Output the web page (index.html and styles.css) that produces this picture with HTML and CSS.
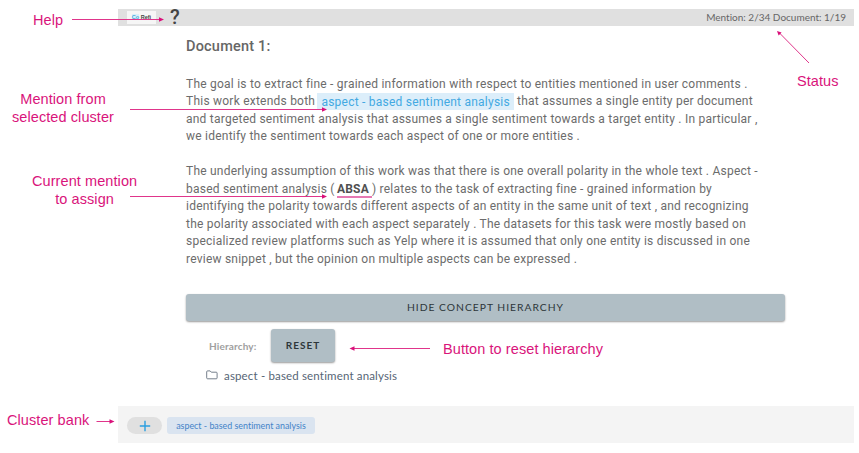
FILE: index.html
```html
<!DOCTYPE html>
<html lang="en">
<head>
<meta charset="utf-8">
<title>Annotation tool</title>
<link rel="stylesheet" href="styles.css">
</head>
<body>
<div class="app">
  <header class="topbar">
    <div class="logo"><span class="logo-co">Co</span> <span class="logo-refi">Refi</span></div>
    <div class="help">?</div>
    <div class="status">Mention: 2/34 Document: 1/19</div>
  </header>
  <main class="content">
    <h1 class="title">Document 1:</h1>
    <p class="para">The goal is to extract fine - grained information with respect to entities mentioned in user comments .<br>This work extends both <span class="mention">aspect - based sentiment analysis</span> that assumes a single entity per document<br>and targeted sentiment analysis that assumes a single sentiment towards a target entity . In particular ,<br>we identify the sentiment towards each aspect of one or more entities .</p>
    <p class="para">The underlying assumption of this work was that there is one overall polarity in the whole text . Aspect -<br>based sentiment analysis ( <span class="current">ABSA</span>) relates to the task of extracting fine - grained information by<br>identifying the polarity towards different aspects of an entity in the same unit of text , and recognizing<br>the polarity associated with each aspect separately . The datasets for this task were mostly based on<br>specialized review platforms such as Yelp where it is assumed that only one entity is discussed in one<br>review snippet , but the opinion on multiple aspects can be expressed .</p>
    <button class="btn btn-wide">HIDE CONCEPT HIERARCHY</button>
    <div class="hierarchy">
      <span class="hierarchy-label">Hierarchy:</span>
      <button class="btn btn-reset">RESET</button>
    </div>
    <div class="node">
      <svg class="folder" viewBox="0 0 12 10"><path d="M1.600 .9h2.500l1.200 1.300h4.900q.9 0 .9.9v4.800q0 .9-.9.9H1.600q-.9 0-.9-.9V1.800q0-.9.9-.9z"/></svg>
      <span class="node-text">aspect - based sentiment analysis</span>
    </div>
  </main>
  <footer class="bank">
    <button class="add"><svg viewBox="0 0 12 12"><path d="M6 .8v10.400M.8 6h10.400"/></svg></button>
    <span class="chip">aspect - based sentiment analysis</span>
  </footer>
</div>
<svg class="arrows" viewBox="0 0 859 453">
  <path class="line" d="M72 19.500H160M130 109.500H323M130 196.500H323M430 348.500H354M96.500 421.500H111M809 63L779.500 33"/>
  <path class="head" d="M164 19.500l-5-2.200v4.400zM327 109.500l-5-2.200v4.400zM327 196.500l-5-2.200v4.400zM349.500 348.500l5-2.200v4.400zM114.500 421.500l-5-2.200v4.400zM777 31l4.600 1.600-3 3z"/>
</svg>
<div class="note note-help">Help</div>
<div class="note note-mention">Mention from<br>selected cluster</div>
<div class="note note-current">Current mention<br>to assign</div>
<div class="note note-status">Status</div>
<div class="note note-reset">Button to reset hierarchy</div>
<div class="note note-bank">Cluster bank</div>
</body>
</html>
```
FILE: styles.css
```css
* { box-sizing: border-box; }
body { margin: 0; width: 859px; height: 453px; position: relative; overflow: hidden; background: #fff; font-family: Lato, sans-serif; font-variant-ligatures: none; }
button { border: 0; padding: 0; margin: 0; font-family: inherit; }
.app { display: flex; flex-direction: column; width: 736px; height: 434px; margin: 9px 0 0 118px; }
.topbar { display: flex; align-items: center; height: 17px; padding: 0 8px 0 9px; background: #e0e0e0; }
.logo { width: 29px; height: 13px; background: #f6f6f6; font: bold 5.500px/12px "Liberation Sans", sans-serif; text-align: center; white-space: nowrap; }
.logo-co { color: #45a9dd; background: #d9effa; }
.logo-refi { color: #444; }
.help { margin-left: 14px; font: 500 20px/17px Roboto, sans-serif; color: #444; }
.status { margin-left: auto; font-size: 10px; line-height: 17px; color: #666; white-space: nowrap; }
.content { flex: 1; padding: 11px 69px 0 68px; }
.title { margin: 0 0 19px; font: 500 14.500px/20px Roboto, sans-serif; letter-spacing: .2px; color: #666; }
.para { margin: 0 0 17px; font: 12px/17.500px Roboto, sans-serif; letter-spacing: .23px; color: #6c6c6c; white-space: nowrap; }
.title + .para { margin-bottom: 17.500px; margin-top: -.5px; }
.mention { padding: 1.500px 4px; margin-left: -1px; background: #dceefa; color: #43a9e2; }
.current { font-weight: 700; color: #505050; padding: 0 3px 0 0; margin-left: -1px; border-bottom: 2px solid #e679b3; }
.btn { display: block; border-radius: 3px; background: #b0bec5; color: #2d363a; font-size: 10.300px; letter-spacing: 1px; box-shadow: 0 1px 2px rgba(0,0,0,.4); }
.btn-wide { width: 599px; height: 27px; margin-top: 26px; padding-bottom: 1px; }
.hierarchy { display: flex; align-items: center; margin-top: 8px; padding-left: 23px; }
.hierarchy-label { width: 62px; font-size: 10px; letter-spacing: .15px; font-weight: 700; color: #a0a0a0; }
.btn-reset { width: 64px; height: 33px; padding-bottom: 1px; font-weight: 700; font-size: 10px; }
.node { display: flex; align-items: center; height: 18px; margin-top: 4px; padding-left: 20px; color: #566575; font-size: 11.500px; letter-spacing: .16px; white-space: nowrap; }
.folder { width: 12px; height: 10px; margin-right: 6px; fill: none; stroke: #66727f; stroke-width: .9; }
.bank { display: flex; align-items: center; height: 37px; padding: 2px 0 0 9px; background: #f4f4f4; }
.add { display: flex; align-items: center; justify-content: center; width: 35px; height: 17px; border-radius: 9px; background: #e0e0e0; }
.add svg { width: 12px; height: 12px; stroke: #2b9fe0; stroke-width: 1.400; fill: none; }
.chip { width: 148px; height: 17px; margin-left: 5px; border-radius: 3px; background: #dae4f0; color: #4383c8; font-size: 8.900px; line-height: 17px; text-align: center; white-space: nowrap; }
.arrows { position: absolute; left: 0; top: 0; width: 859px; height: 453px; }
.line { fill: none; stroke: #e0358b; stroke-width: 1; }
.head { fill: #d9107a; }
.note { position: absolute; font: 14.500px/18px "Liberation Sans", sans-serif; letter-spacing: .08px; color: #d9147b; text-align: center; white-space: nowrap; }
.note-help { left: 33px; top: 11px; }
.note-mention { left: 12px; top: 90px; }
.note-current { left: 32px; top: 172px; }
.note-status { left: 797px; top: 72px; }
.note-reset { left: 443px; top: 340px; }
.note-bank { left: 7px; top: 411px; }
```
